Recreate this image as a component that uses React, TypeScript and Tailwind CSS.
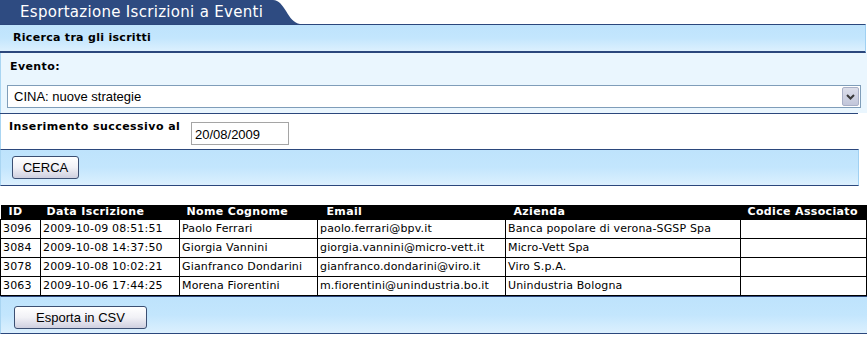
const rows = [
  { id: '3096', data: '2009-10-09 08:51:51', nome: 'Paolo Ferrari', email: 'paolo.ferrari@bpv.it', azienda: 'Banca popolare di verona-SGSP Spa' },
  { id: '3084', data: '2009-10-08 14:37:50', nome: 'Giorgia Vannini', email: 'giorgia.vannini@micro-vett.it', azienda: 'Micro-Vett Spa' },
  { id: '3078', data: '2009-10-08 10:02:21', nome: 'Gianfranco Dondarini', email: 'gianfranco.dondarini@viro.it', azienda: 'Viro S.p.A.' },
  { id: '3063', data: '2009-10-06 17:44:25', nome: 'Morena Fiorentini', email: 'm.fiorentini@unindustria.bo.it', azienda: 'Unindustria Bologna' },
]

function OldButton({ label, width }: { label: string; width: string }) {
  return (
    <button
      className={`${width} h-[23px] rounded-[3px] border border-[#3b4f72] bg-gradient-to-b from-white via-[#f1f1f6] to-[#cfd0e0] font-['Liberation_Sans',Arial,sans-serif] text-[13px] leading-[21px] text-black`}
    >
      {label}
    </button>
  )
}

export default function App() {
  return (
    <div className="w-[867px] h-[337px] bg-white font-['DejaVu_Sans',Verdana,sans-serif] text-[11px] text-black">
      {/* Tab */}
      <div className="flex h-[24px]">
        <div className="w-[272px] bg-[#2e4b81] pl-[20px] text-[15px] tracking-[0.3px] leading-[24px] text-white">
          Esportazione Iscrizioni a Eventi
        </div>
        <svg width="28" height="24" viewBox="0 0 28 24">
          <path d="M0 0 H1 C7 0 10 5 14 11 C18 18 22 23 28 24 H0 Z" fill="#2e4b81" />
        </svg>
      </div>

      {/* Header bar */}
      <div className="w-[866px] h-[29px] border-t border-t-[#2b477c] border-b-2 border-b-[#2b477c] border-r border-r-[#9fd0f2] bg-gradient-to-b from-[#bee3fc] via-[#c3e6fd] to-[#dcf0fe] pl-[13px] flex items-center font-bold tracking-[0.3px]">
        Ricerca tra gli iscritti
      </div>

      {/* Evento */}
      <div className="w-[867px] h-[60px] border-l border-l-[#a9d5f2] bg-[#eaf6fe] pl-[6px] pt-[7px]">
        <div className="h-[14px] leading-[14px] font-bold tracking-[0.4px] pl-[3px]">Evento:</div>
        <div className="mt-[11px] w-[854px] h-[23px] border border-[#7f9db9] bg-white flex items-center justify-between pl-[6px] pr-[1px]">
          <span className="font-['Liberation_Sans',Arial,sans-serif] text-[13px]">CINA: nuove strategie</span>
          <div className="w-[17px] h-[19px] rounded-[2px] border border-[#a8afc6] bg-gradient-to-b from-[#dcdeea] to-[#c2c6da] flex items-center justify-center">
            <svg width="9" height="6" viewBox="0 0 9 6">
              <path d="M1 1 L4.5 4.5 L8 1" stroke="#3a3a3a" strokeWidth="2" fill="none" />
            </svg>
          </div>
        </div>
      </div>
      <div className="w-[858px] h-px bg-[#2b477c]" />

      {/* Inserimento */}
      <div className="w-[858px] h-[35px] border-l border-l-[#a9d5f2] pl-[8px] flex items-center">
        <div className="w-[182px] font-bold tracking-[0.45px] pb-[8px]">Inserimento successivo al</div>
        <div className="w-[98px] h-[23px] mt-[3px] border border-[#a5a5a5] pl-[3px] pt-[4px] font-['Liberation_Sans',Arial,sans-serif] text-[13px] leading-[16px]">
          20/08/2009
        </div>
      </div>

      {/* Cerca bar */}
      <div className="w-[859px] h-[37px] border-t border-t-[#2b477c] border-b border-b-[#2b477c] border-l border-l-[#a9d5f2] border-r border-r-[#9fd0f2] bg-gradient-to-b from-[#bee3fc] via-[#c3e6fd] to-[#dcf0fe] pl-[11px] pt-[6px]">
        <OldButton label="CERCA" width="w-[67px]" />
      </div>

      {/* Results table */}
      <table className="mt-[19px] w-[866px] border-collapse table-fixed">
        <colgroup>
          <col className="w-[40px]" />
          <col className="w-[139px]" />
          <col className="w-[138px]" />
          <col className="w-[188px]" />
          <col className="w-[235px]" />
          <col className="w-[126px]" />
        </colgroup>
        <thead>
          <tr className="h-[14px] bg-black text-white leading-[13px] tracking-[0.35px]">
            <th className="text-left pl-[8px] font-bold">ID</th>
            <th className="text-left pl-[6px] font-bold">Data Iscrizione</th>
            <th className="text-left pl-[7px] font-bold">Nome Cognome</th>
            <th className="text-left pl-[9px] font-bold">Email</th>
            <th className="text-left pl-[8px] font-bold">Azienda</th>
            <th className="text-left pl-[7px] font-bold whitespace-nowrap">Codice Associato</th>
          </tr>
        </thead>
        <tbody>
          {rows.map((r) => (
            <tr key={r.id} className="h-[19px] leading-[17px] tracking-[0.15px]">
              <td className="border border-black pl-[2px] whitespace-nowrap">{r.id}</td>
              <td className="border border-black pl-[2px] whitespace-nowrap">{r.data}</td>
              <td className="border border-black pl-[2px] whitespace-nowrap">{r.nome}</td>
              <td className="border border-black pl-[2px] whitespace-nowrap">{r.email}</td>
              <td className="border border-black pl-[2px] whitespace-nowrap">{r.azienda}</td>
              <td className="border border-black pl-[2px]"></td>
            </tr>
          ))}
        </tbody>
      </table>

      {/* Export bar */}
      <div className="w-[867px] h-[38px] border-t border-t-[#2b477c] border-b border-b-[#2b477c] border-l border-l-[#a9d5f2] bg-gradient-to-b from-[#bee3fc] via-[#c3e6fd] to-[#dcf0fe] pl-[13px] pt-[9px]">
        <OldButton label="Esporta in CSV" width="w-[133px]" />
      </div>
    </div>
  )
}
